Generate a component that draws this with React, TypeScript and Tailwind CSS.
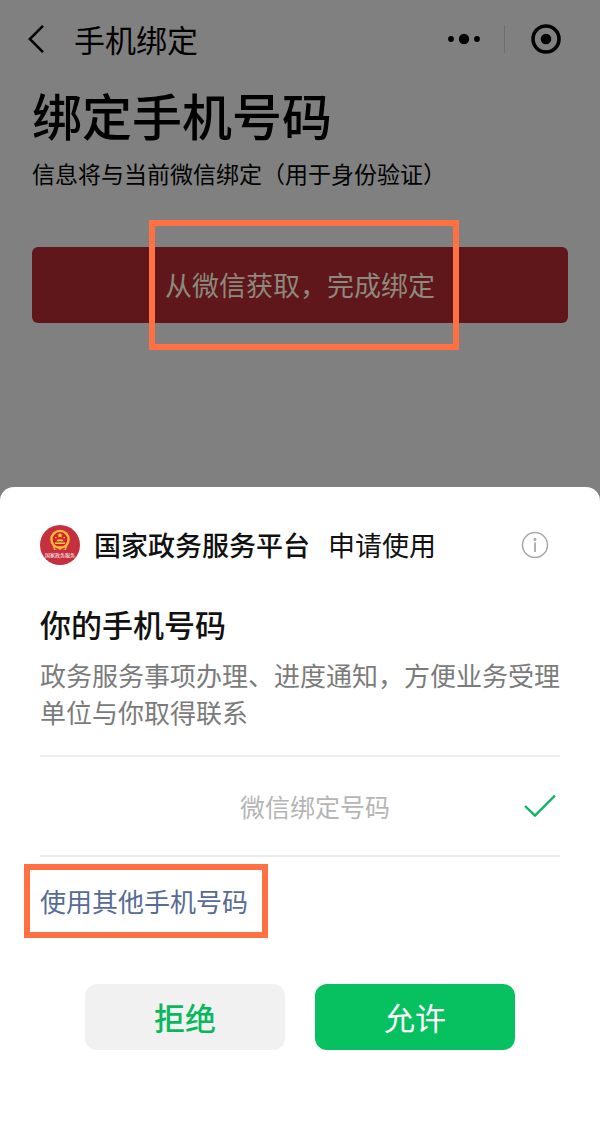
import React from 'react';

const StarEmblem: React.FC = () => (
  <svg viewBox="0 0 40 40" className="h-10 w-10 shrink-0" role="img" aria-label="国家政务服务平台">
    <circle cx="20" cy="20" r="20" fill="#c62f3e" />
    <circle cx="20" cy="14.500" r="8.600" fill="#d6232b" stroke="#f9b93c" strokeWidth="2.400" />
    <path
      d="m20 7.600.8 1.800 2 .1-1.500 1.300.5 1.900-1.800-1.100-1.800 1.100.5-1.900-1.500-1.300 2-.1z"
      fill="#ffd54a"
    />
    <circle cx="15.800" cy="12.600" r=".8" fill="#ffd54a" />
    <circle cx="24.200" cy="12.600" r=".8" fill="#ffd54a" />
    <path d="M17.500 14.500h5l1 1.700h-7zM15 17.500h10v1.600H15z" fill="#ffd54a" />
    <path d="M12.500 19.500q7.500 4 15 0L26 25q-6-2-12 0z" fill="#f9b93c" />
    <path d="M15 22.500q5 2.500 10 0v1.200q-5 2-10 0z" fill="#d6232b" />
    <circle cx="20" cy="23" r="1.800" fill="#f9b93c" />
    <text x="20" y="32" textAnchor="middle" fontSize="5" fill="#fff">
      国家政务服务
    </text>
  </svg>
);

const NavBar: React.FC = () => (
  <header className="flex h-[77px] items-center pl-7 pr-[39px]">
    <button type="button" aria-label="返回" className="flex">
      <svg width="16" height="28" viewBox="0 0 16 28" fill="none" stroke="currentColor" strokeWidth="2.500">
        <path d="M15 0.800 1.800 14 15 27.200" />
      </svg>
    </button>
    <h2 className="ml-[30px] text-[31px] leading-10">手机绑定</h2>
    <div className="ml-auto flex items-center">
      <button type="button" aria-label="更多" className="flex">
        <svg width="32" height="12" viewBox="0 0 32 12" fill="currentColor">
          <circle cx="3" cy="6" r="2.900" />
          <circle cx="16" cy="6" r="5.200" />
          <circle cx="29" cy="6" r="2.900" />
        </svg>
      </button>
      <span className="ml-6 h-7 w-px bg-[#6e6e6e]" />
      <button type="button" aria-label="关闭" className="ml-[26px] flex">
        <svg width="30" height="30" viewBox="0 0 30 30">
          <circle cx="15" cy="15" r="13" fill="none" stroke="currentColor" strokeWidth="3.600" />
          <circle cx="15" cy="15" r="5.300" fill="currentColor" />
        </svg>
      </button>
    </div>
  </header>
);

const BindPage: React.FC = () => (
  <main className="px-8 pb-[164px]">
    <h1 className="text-[50px] font-medium leading-[74px]">绑定手机号码</h1>
    <p className="mt-1 text-[23px] leading-9">信息将与当前微信绑定（用于身份验证）</p>
    <button
      type="button"
      className="mt-14 flex h-[76px] w-full items-center justify-center rounded-md bg-[#5f171b] text-[27px] leading-[42px] text-[#8d897e]"
    >
      <span className="relative">
        从微信获取，完成绑定
        <span className="absolute -bottom-11 -left-4 -right-6 -top-11 border-[6px] border-[#ff7043]" />
      </span>
    </button>
  </main>
);

const AuthSheet: React.FC = () => (
  <section className="flex-1 rounded-t-[14px] bg-white px-10 pb-[79px] pt-[38px] text-[#111]">
    <div className="flex items-center">
      <StarEmblem />
      <span className="ml-[14px] text-[27px] font-medium leading-10">国家政务服务平台</span>
      <span className="ml-[18px] text-[27px] leading-10">申请使用</span>
      <button type="button" aria-label="说明" className="ml-auto mr-[11px] flex text-[#a8a8a8]">
        <svg width="28" height="28" viewBox="0 0 28 28" fill="none" stroke="currentColor" strokeWidth="1.500">
          <circle cx="14" cy="14" r="12.500" />
          <path d="M14 11.500V21" strokeWidth="1.800" />
          <circle cx="14" cy="8.500" r="1.400" fill="currentColor" stroke="none" />
        </svg>
      </button>
    </div>

    <h2 className="mt-[39px] text-[31px] font-medium leading-10">你的手机号码</h2>
    <p className="mt-3 text-[26px] leading-[37px] text-[#7b7b7b]">
      政务服务事项办理、进度通知，方便业务受理单位与你取得联系
    </p>

    <label className="mt-[25px] flex items-center justify-between border-y-2 border-[#ededed] py-[29px] pl-[200px] pr-1">
      <input type="radio" name="phone" defaultChecked className="peer sr-only" />
      <span className="text-[25px] leading-10 text-[#b5b5b5]">微信绑定号码</span>
      <svg
        className="text-[#07b562]"
        width="32"
        height="24"
        viewBox="0 0 32 24"
        fill="none"
        stroke="currentColor"
        strokeWidth="2.400"
      >
        <path d="M1 12 11 21.500 31 1.500" />
      </svg>
    </label>

    <a href="#other" className="relative mt-6 inline-block text-[26px] leading-10 text-[#576b95]">
      使用其他手机号码
      <span className="absolute -bottom-[17px] -left-4 -right-5 -top-[17px] border-[6px] border-[#ff7043]" />
    </a>

    <div className="mt-[63px] flex justify-center gap-[30px] text-[31px] leading-10">
      <button type="button" className="h-[66px] w-[200px] rounded-xl bg-[#f1f1f1] font-medium text-[#07b95c]">
        拒绝
      </button>
      <button type="button" className="h-[66px] w-[200px] rounded-xl bg-[#07c160] text-white">
        允许
      </button>
    </div>
  </section>
);

const App: React.FC = () => {
  return (
    <div className="flex min-h-screen flex-col bg-[#808080] font-['Noto_Sans_CJK_SC',sans-serif] text-black">
      <NavBar />
      <BindPage />
      <AuthSheet />
    </div>
  );
};

export default App;
